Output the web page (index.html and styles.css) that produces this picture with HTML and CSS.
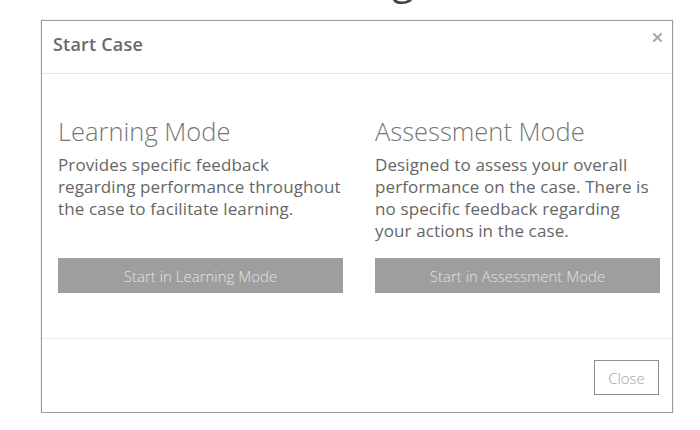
FILE: index.html
```html
<!DOCTYPE html>
<html lang="en">
<head>
    <meta charset="UTF-8">
    <meta name="viewport" content="width=device-width, initial-scale=1.0">
    <title>Start Case</title>
    <link rel="stylesheet" href="styles.css">
</head>
<body>

    <div class="page-title">Learning</div>

    <div class="modal">
        <div class="modal-header">
            <h4 class="modal-title">Start Case</h4>
            <button class="close" aria-label="Close">
                <svg width="9" height="9" viewBox="0 0 9 9">
                    <path d="M1 1 L8 8 M8 1 L1 8" stroke="#a8a8a8" stroke-width="2" stroke-linecap="square"/>
                </svg>
            </button>
        </div>

        <div class="modal-body">
            <div class="mode">
                <h3>Learning Mode</h3>
                <p>Provides specific feedback regarding performance throughout the case to facilitate learning.</p>
                <button class="btn-mode">Start in Learning Mode</button>
            </div>
            <div class="mode">
                <h3>Assessment Mode</h3>
                <p>Designed to assess your overall performance on the case. There is no specific feedback regarding your actions in the case.</p>
                <button class="btn-mode">Start in Assessment Mode</button>
            </div>
        </div>

        <div class="modal-footer">
            <button class="btn-close">Close</button>
        </div>
    </div>

</body>
</html>
```

FILE: styles.css
```css
body {
    font-family: "Open Sans", Arial, sans-serif;
    margin: 0;
    background-color: #fff;
    overflow: hidden;
}

/* заголовок страницы под модалкой */
.page-title {
    font-size: 40px;
    line-height: 40px;
    color: #444;
    margin: -41px 0 0 251px;
    height: 40px;
}

.modal {
    box-sizing: border-box;
    width: 632px;
    margin: 21px 0 0 41px;
    border: 1px solid #9a9a9a;
    box-shadow: 0 0 1px rgba(0, 0, 0, 0.3);
    background: #fff;
}

.modal-header {
    display: flex;
    justify-content: space-between;
    align-items: flex-start;
    padding: 11px 10px 17px 11px;
    border-bottom: 1px solid #e5e5e5;
}

.modal-title {
    margin: 0;
    font-size: 18px;
    font-weight: 600;
    line-height: 24px;
    letter-spacing: 0.2px;
    color: #6a6a6a;
}

.close {
    background: none;
    border: none;
    padding: 0;
    margin-top: 1px;
    cursor: pointer;
    line-height: 0;
}

.modal-body {
    display: grid;
    grid-template-columns: 285px 285px;
    column-gap: 32px;
    padding: 43px 12px 45px 16px;
}

.mode {
    display: flex;
    flex-direction: column;
}

.mode h3 {
    margin: 0 0 8px;
    font-size: 25.5px;
    font-weight: 300;
    line-height: 29px;
    color: #777;
}

.mode p {
    margin: 0 0 16px;
    font-size: 17px;
    line-height: 22px;
    letter-spacing: 0.12px;
    color: #666;
}

.btn-mode {
    margin-top: auto;
    height: 35px;
    border: none;
    background-color: #9e9e9e;
    color: #e2e2e2;
    font-family: inherit;
    font-size: 15px;
    font-weight: 300;
    cursor: pointer;
}

.modal-footer {
    display: flex;
    justify-content: flex-end;
    padding: 21px 13px 17px;
    border-top: 1px solid #ebebeb;
}

.btn-close {
    width: 65px;
    height: 35px;
    border: 1px solid #8c8c8c;
    background: #fff;
    color: #a0a0a0;
    font-family: inherit;
    font-size: 15px;
    font-weight: 300;
    cursor: pointer;
}
```
